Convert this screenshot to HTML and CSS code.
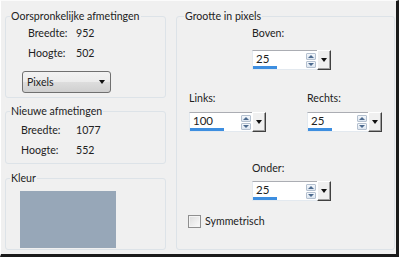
FILE: index.html
```html
<!DOCTYPE html>
<html lang="nl">
<head>
  <meta charset="UTF-8" />
  <title>Canvasgrootte</title>
  <link rel="stylesheet" href="styles.css">
</head>
<body>

  <div class="window">
    <div class="col-left">
      <fieldset class="group group-orig">
        <legend>Oorspronkelijke afmetingen</legend>
        <div class="dims dims-orig">
          <span>Breedte:</span><span>952</span>
          <span>Hoogte:</span><span>502</span>
        </div>
        <div class="select">Pixels<span class="caret"></span></div>
      </fieldset>

      <fieldset class="group group-new">
        <legend>Nieuwe afmetingen</legend>
        <div class="dims dims-new">
          <span>Breedte:</span><span>1077</span>
          <span>Hoogte:</span><span>552</span>
        </div>
      </fieldset>

      <fieldset class="group group-color">
        <legend>Kleur</legend>
        <div class="swatch"></div>
      </fieldset>
    </div>

    <fieldset class="group group-size">
      <legend>Grootte in pixels</legend>

      <div class="row row-top">
        <div class="field">
          <label>Boven:</label>
          <div class="spin spin-wide">
            <div class="spin-input">
              <span class="spin-value">25</span>
              <span class="spin-bar" style="width:24px"></span>
            </div>
            <div class="updown"><span class="up"></span><span class="down"></span></div>
            <div class="drop"><span class="caret"></span></div>
          </div>
        </div>
      </div>

      <div class="row row-mid">
        <div class="field">
          <label>Links:</label>
          <div class="spin">
            <div class="spin-input">
              <span class="spin-value">100</span>
              <span class="spin-bar" style="width:34px"></span>
            </div>
            <div class="updown"><span class="up"></span><span class="down"></span></div>
            <div class="drop"><span class="caret"></span></div>
          </div>
        </div>
        <div class="field field-right">
          <label>Rechts:</label>
          <div class="spin spin-narrow">
            <div class="spin-input">
              <span class="spin-value">25</span>
              <span class="spin-bar" style="width:24px"></span>
            </div>
            <div class="updown"><span class="up"></span><span class="down"></span></div>
            <div class="drop"><span class="caret"></span></div>
          </div>
        </div>
      </div>

      <div class="row row-bottom">
        <div class="field">
          <label>Onder:</label>
          <div class="spin spin-wide">
            <div class="spin-input">
              <span class="spin-value">25</span>
              <span class="spin-bar" style="width:24px"></span>
            </div>
            <div class="updown"><span class="up"></span><span class="down"></span></div>
            <div class="drop"><span class="caret"></span></div>
          </div>
        </div>
      </div>

      <label class="check"><span class="box"></span>Symmetrisch</label>
    </fieldset>
  </div>

</body>
</html>
```

FILE: styles.css
```css
* {
  box-sizing: border-box;
}
body {
  margin: 0;
  font-family: Lato, "Open Sans", sans-serif;
  font-size: 10.6px;
  line-height: 14px;
  color: #222;
  background: #f0f0f0;
}
.window {
  width: 399px;
  height: 257px;
  background: #f0f0f0;
  border-right: 3px solid #1a1a1a;
  border-bottom: 3px solid #1a1a1a;
  border-left: 1px solid #fff;
  border-top: 1px solid #fbfbfb;
  padding: 8px 0 0 4px;
  display: flex;
  align-items: flex-start;
}
.col-left {
  width: 161px;
  display: flex;
  flex-direction: column;
}
.group {
  margin: 0;
  padding: 0;
  border: 1px solid #dde3e8;
  border-radius: 3px;
  min-width: 0;
}
.group legend {
  padding: 0 1px;
  margin-left: 4px;
}

/* left column */
.group-orig {
  height: 89px;
}
.dims {
  display: grid;
  grid-template-rows: 20px 20px;
  align-items: center;
}
.dims-orig {
  grid-template-columns: 48px auto;
  padding-left: 22px;
}
.dims-new {
  grid-template-columns: 55px auto;
  padding-left: 15px;
  margin-top: 2px;
}
.select {
  position: relative;
  width: 89px;
  height: 22px;
  margin: 8px 0 0 16px;
  padding: 3px 0 0 4px;
  border: 1px solid #707070;
  border-radius: 3px;
  background: linear-gradient(#f2f2f2 0%, #ebebeb 50%, #dddddd 51%, #cfcfcf 100%);
}
.select .caret {
  position: absolute;
  right: 5px;
  top: 8px;
}
.caret {
  display: block;
  width: 0;
  height: 0;
  border-left: 3px solid transparent;
  border-right: 3px solid transparent;
  border-top: 4px solid #111;
}
.group-new {
  margin-top: 6px;
  height: 60px;
}
.group-color {
  margin-top: 7px;
  height: 79px;
}
.swatch {
  width: 96px;
  height: 57px;
  margin: 6px 0 0 14px;
  background: #97a7b8;
}

/* right group */
.group-size {
  margin-left: 10px;
  width: 219px;
  height: 241px;
}
.group-size legend {
  margin-left: 7px;
}
.row {
  display: flex;
}
.field {
  display: flex;
  flex-direction: column;
}
.field label {
  display: block;
}
.row-top {
  margin: 3px 0 0 75px;
}
.row-top .field {
  gap: 10px;
}
.row-mid {
  margin: 21px 0 0 12px;
}
.row-mid .field {
  gap: 7px;
}
.field-right {
  margin-left: 41px;
}
.row-bottom {
  margin: 29px 0 0 75px;
}
.row-bottom .field {
  gap: 6px;
}
.spin {
  display: flex;
  width: 77px;
  height: 20px;
}
.spin-wide {
  width: 79px;
}
.spin-narrow {
  width: 75px;
}
.spin-input {
  position: relative;
  flex: 1;
  display: flex;
  align-items: center;
  background: #fff;
  border: 1px solid #e3e9ef;
  border-top-color: #abadb3;
  border-right: none;
  padding: 0 0 2px 3px;
  font-size: 11.5px;
}
.spin-bar {
  position: absolute;
  left: 0;
  bottom: 0;
  height: 3px;
  background: #3d8ee0;
}
.updown {
  display: flex;
  flex-direction: column;
  justify-content: center;
  gap: 1px;
  background: #fff;
  border-top: 1px solid #abadb3;
  border-bottom: 1px solid #e3e9ef;
  padding-right: 1px;
}
.updown span {
  position: relative;
  width: 10px;
  height: 7px;
  border: 1px solid #b4c0cf;
  border-radius: 1px;
  background: linear-gradient(#f4f7fb, #dde6f0);
}
.updown span::after {
  content: "";
  position: absolute;
  left: 1px;
  width: 0;
  height: 0;
  border-left: 3px solid transparent;
  border-right: 3px solid transparent;
}
.updown .up::after {
  top: 1px;
  border-bottom: 3px solid #4d6a8e;
}
.updown .down::after {
  top: 1px;
  border-top: 3px solid #4d6a8e;
}
.drop {
  width: 14px;
  display: flex;
  align-items: center;
  justify-content: center;
  background: #f0f0f0;
  border-top: 1px solid #fff;
  border-left: 1px solid #fff;
  border-right: 1px solid #404040;
  border-bottom: 1px solid #404040;
  box-shadow: inset -1px -1px #a0a0a0;
}
.check {
  display: flex;
  align-items: center;
  gap: 4px;
  margin: 13px 0 0 11px;
}
.check .box {
  width: 13px;
  height: 13px;
  border: 1px solid #8f8f8f;
  background: linear-gradient(135deg, #dcdcdc, #fbfbfb);
  box-shadow: inset 0 0 0 1px #f4f4f4;
}
```
